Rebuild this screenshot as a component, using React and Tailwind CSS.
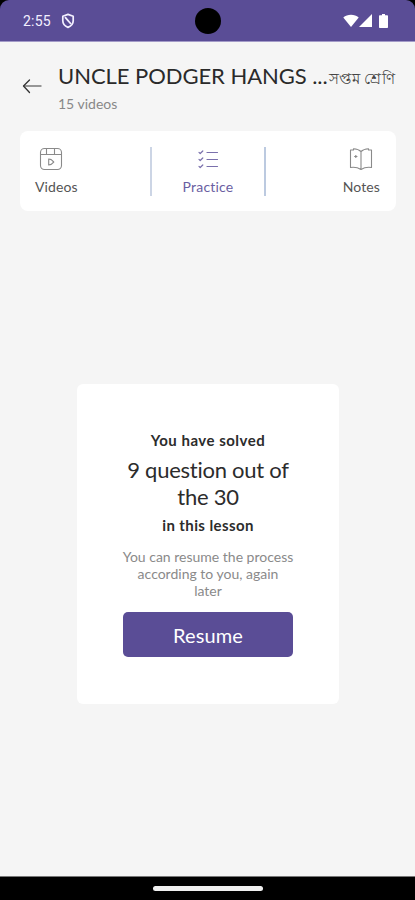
import React from "react";

const ShieldIcon = () => (
  <svg className="w-[14px] h-[16px]" viewBox="0 0 14 16" fill="none">
    <path
      d="M7 1.4 12.2 3.2v4.600c0 3.200-2.200 5.400-5.200 6.600-3-1.200-5.200-3.400-5.200-6.600V3.200L7 1.400Z"
      stroke="#f3f0ff"
      strokeWidth="1.7"
      strokeLinejoin="round"
    />
    <path d="M4 4.200 10 11" stroke="#f3f0ff" strokeWidth="1.8" />
  </svg>
);

const WifiIcon = () => (
  <svg className="w-[16px] h-[13px]" viewBox="0 0 16 13" fill="#fff">
    <path d="M8 13 .3 3.600C2.400 1.800 5 .8 8 .8s5.600 1 7.700 2.800L8 13Z" />
  </svg>
);

const SignalIcon = () => (
  <svg className="w-[13px] h-[13px]" viewBox="0 0 13 13" fill="#fff">
    <path d="M13 0v13H0L13 0Z" />
  </svg>
);

const BatteryIcon = () => (
  <svg className="w-[9px] h-[14px]" viewBox="0 0 9 14" fill="#fff">
    <path d="M3 0h3v1.300h2c.6 0 1 .4 1 1V13c0 .6-.4 1-1 1H1c-.6 0-1-.4-1-1V2.300c0-.6.4-1 1-1h2V0Z" />
  </svg>
);

const BackIcon = () => (
  <svg className="w-[20px] h-[16px]" viewBox="0 0 20 16" fill="none" strokeLinecap="round">
    <path d="M2 8h17" stroke="#777" strokeWidth="1.4" />
    <path d="M7.500 2 1.500 8l6 6.500" stroke="#333" strokeWidth="1.3" strokeLinejoin="round" />
  </svg>
);

const VideosIcon = () => (
  <svg className="w-[24px] h-[24px]" viewBox="0 0 24 24" fill="none" stroke="#8a8a8a" strokeWidth="1.1">
    <rect x="1.500" y="1.500" width="21" height="21" rx="4" />
    <path d="M1.500 7.500h21M7.500 1.500v6M15.500 1.500v6" />
    <path d="M9.700 12v6l2.500-.6 2.600-2.400-2.600-2.400L9.700 12Z" strokeLinejoin="round" />
  </svg>
);

const PracticeIcon = () => (
  <svg
    className="w-[24px] h-[24px]"
    viewBox="0 0 24 24"
    fill="none"
    stroke="#7a70ac"
    strokeWidth="1.2"
    strokeLinecap="round"
    strokeLinejoin="round"
  >
    <path d="m3 5.400 1.200 1.100L6.800 4M3 12.400l1.200 1.100L6.800 11M3 19.400l1.200 1.100L6.800 18" />
    <path d="M11 5.500h10.500M11 12.500h10.500M11 19.500h10.500" />
  </svg>
);

const NotesIcon = () => (
  <svg className="w-[24px] h-[24px]" viewBox="0 0 24 24" fill="none" stroke="#8a8a8a" strokeWidth="1.1" strokeLinejoin="round">
    <path d="M12 4.500C10.500 3 7.500 1.900 4.500 1.700V3H1.500v17.500c3.800-.6 7.500.1 10.500 2V4.500Z" />
    <path d="M12 4.500c1.500-1.500 4.500-2.600 7.500-2.800V3h3v17.500c-3.800-.6-7.500.1-10.500 2" />
    <path d="M5.200 9.500h3.200M6.800 8v3" />
  </svg>
);

const StatusBar = () => (
  <header className="relative h-[42px] shrink-0 bg-black">
    <div className="flex h-[42px] items-center justify-between rounded-t-[9px] border-b border-[#a39bc8] bg-[#5a4d96] pl-[23px] pr-[27px]">
      <div className="flex items-center gap-[10px]">
        <span className="font-[Roboto,sans-serif] text-[14px] leading-[16px] tracking-[0.2px] text-[#f3f0ff]">
          2:55
        </span>
        <ShieldIcon />
      </div>
      <div className="flex items-center">
        <WifiIcon />
        <SignalIcon />
        <span className="w-[7px]" />
        <BatteryIcon />
      </div>
    </div>
    {/* Camera cutout */}
    <div className="absolute left-[195px] top-[8px] h-[26px] w-[26px] rounded-full bg-black" />
  </header>
);

const App = () => {
  return (
    <div className="flex h-[900px] w-[415px] flex-col overflow-hidden bg-[#f5f5f5] font-[Lato,'Noto_Sans',sans-serif] [font-variant-ligatures:none]">
      <StatusBar />

      {/* Lesson header */}
      <div className="flex h-[89px] shrink-0 items-start pl-[22px] pr-[18px] pt-[20px]">
        <button type="button" aria-label="Back" className="mt-[16px]">
          <BackIcon />
        </button>
        <div className="ml-[16px] w-[271px]">
          <h1 className="whitespace-nowrap text-[22px] leading-[28px] tracking-[-0.05px] text-[#2a2a2a]">
            UNCLE PODGER HANGS ...
          </h1>
          <p className="mt-[6px] text-[14px] leading-[16px] text-[#888]">15 videos</p>
        </div>
        <span className="mt-[6px] whitespace-nowrap text-[15px] leading-[20px] tracking-[0.4px] text-[#444]">
          সপ্তম শ্রেণি
        </span>
      </div>

      {/* Tabs */}
      <nav className="ml-[20px] mr-[19px] flex h-[80px] shrink-0 items-center rounded-[8px] bg-white">
        <button type="button" className="flex w-[130px] flex-col items-start pl-[15px]">
          <span className="ml-[4px]">
            <VideosIcon />
          </span>
          <span className="mt-[7px] text-[14px] leading-[18px] tracking-[0.1px] text-[#555]">Videos</span>
        </button>
        <div className="h-[49px] w-[2px] bg-[#ccd5e5]" />
        <button type="button" className="flex w-[112px] flex-col items-center">
          <PracticeIcon />
          <span className="mt-[7px] text-[14px] leading-[18px] tracking-[0.2px] text-[#6a5ea2]">Practice</span>
        </button>
        <div className="h-[49px] w-[2px] bg-[#bccae0]" />
        <button type="button" className="ml-auto mr-[16px] flex flex-col items-center">
          <NotesIcon />
          <span className="mt-[7px] text-[14px] leading-[18px] tracking-[0.1px] text-[#555]">Notes</span>
        </button>
      </nav>

      {/* Progress card */}
      <main className="flex flex-1 justify-center pl-px pt-[173px]">
        <section className="flex h-[320px] w-[262px] flex-col items-center rounded-[6px] bg-white px-[45px] pt-[46px] text-center">
          <p className="text-[15px] font-bold leading-[20px] tracking-[0.5px] text-[#2c2c2c]">You have solved</p>
          <h2 className="mt-[6px] whitespace-nowrap text-[22px] leading-[27px] tracking-[-0.25px] text-[#2c2c2c]">
            9 question out of
            <br />
            the 30
          </h2>
          <p className="mt-[5px] text-[15px] font-bold leading-[20px] tracking-[0.4px] text-[#2c2c2c]">in this lesson</p>
          <p className="mt-[13px] whitespace-nowrap text-[14px] leading-[17px] text-[#8a8a8a]">
            You can resume the process
            <br />
            according to you, again
            <br />
            later
          </p>
          <button
            type="button"
            className="mt-[13px] h-[45px] w-[170px] shrink-0 rounded-[5px] bg-[#5a4d96] text-[20px] leading-[24px] tracking-[0.1px] text-white"
          >
            Resume
          </button>
        </section>
      </main>

      {/* Gesture bar */}
      <footer className="flex h-[24px] shrink-0 justify-center border-t border-[#777] bg-black pt-[9px]">
        <div className="h-[5px] w-[110px] rounded-full bg-[#f0f0f0]" />
      </footer>
    </div>
  );
};

export default App;
